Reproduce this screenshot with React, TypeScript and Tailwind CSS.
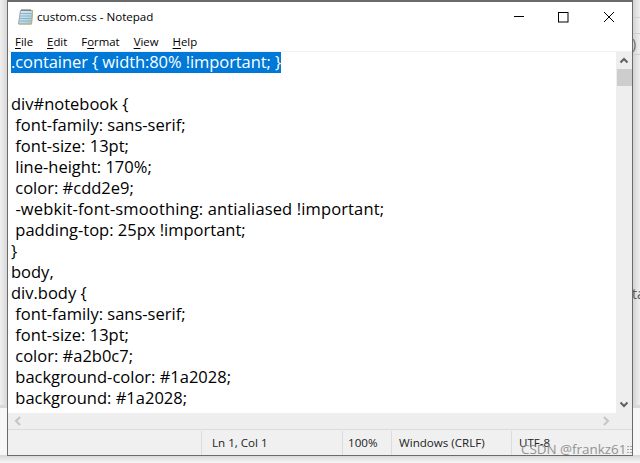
const lines: [string, string][] = [
  ["div#notebook {", ""],
  [" font-family: sans-serif;", ""],
  [" font-size: 13pt;", ""],
  [" line-height: 170%;", ""],
  [" color: #cdd2e9;", ""],
  [" -webkit-font-smoothing: antialiased !important;", "tracking-[0.13px]"],
  [" padding-top: 25px !important;", ""],
  ["}", ""],
  ["body,", ""],
  ["div.body {", ""],
  [" font-family: sans-serif;", ""],
  [" font-size: 13pt;", ""],
  [" color: #a2b0c7;", ""],
  [" background-color: #1a2028;", ""],
  [" background: #1a2028;", ""],
];

function Menu({ k, rest, pre = "" }: { k: string; rest: string; pre?: string }) {
  return (
    <span>
      {pre}
      <span className="underline underline-offset-2">{k}</span>
      {rest}
    </span>
  );
}

export default function App() {
  return (
    <div className="relative w-[640px] h-[463px] overflow-hidden bg-[#f7f7f7] font-['Open_Sans','Noto_Sans',sans-serif]">
      {/* desktop behind the window */}
      <div className="absolute left-0 top-0 w-[7px] h-[405px] bg-gradient-to-r from-[#f0f0f0] to-[#d8d8d8]" />
      <div className="absolute left-[633px] top-0 w-[7px] h-[405px] bg-gradient-to-r from-[#d4d4d4] to-[#efefef]" />
      <div className="absolute left-[633px] top-[17px] w-[7px] h-[1px] bg-[#cfcfcf]" />
      <div className="absolute left-[633px] top-[33px] w-[7px] h-[1px] bg-[#cfcfcf]" />
      <div className="absolute left-[633px] top-[54px] w-[7px] h-[1px] bg-[#cfcfcf]" />
      <div className="absolute left-[632px] top-[35px] w-[8px] overflow-hidden text-[14px] leading-[18px] text-[#666]">)</div>
      <div className="absolute left-[632px] top-[285px] w-[8px] overflow-hidden text-[14px] leading-[18px] text-[#555]">ta</div>
      <div className="absolute left-0 top-[405px] w-[640px] h-[3px] bg-[#d9d9d9]" />
      <div className="absolute left-0 top-[455px] w-[640px] h-[8px] bg-gradient-to-b from-[#d6d6d6] to-[#f7f7f7]" />

      <div className="relative ml-[7px] w-[626px] h-[456px] flex flex-col border border-[#6b6b6b] border-t-2 bg-white">
        <div className="flex items-center h-[30px] shrink-0">
          <svg width="17" height="17" viewBox="0 0 17 17" className="ml-[9px] -mt-[2px]">
            <defs>
              <linearGradient id="pad" x1="0" y1="0" x2="1" y2="1">
                <stop offset="0" stopColor="#dceef6" />
                <stop offset="1" stopColor="#9fcadd" />
              </linearGradient>
            </defs>
            <path d="M3.5 2.5H15.5L14.5 16H1.5z" fill="url(#pad)" stroke="#9aa6a8" strokeWidth="1" />
            <path d="M3 5.5h11.5M2.8 8h11.5M2.6 10.5h11.5M2.4 13h11.5" stroke="#86b3c9" strokeWidth="1" />
            <path d="M5 3V1M7 3V1M9 3V1M11 3V1M13 3V1" stroke="#666" strokeWidth="1" />
            <path d="M15.5 3L14.5 16H2" fill="none" stroke="#c4b07c" strokeWidth="1" />
          </svg>
          <span className="ml-[3px] text-[11.6px] text-black">custom.css - Notepad</span>
          <div className="ml-auto flex items-center h-full">
            <svg width="12" height="12" viewBox="0 0 12 12" className="mr-[33px]">
              <path d="M1 5.5h10" stroke="#000" strokeWidth="1" />
            </svg>
            <svg width="11" height="11" viewBox="0 0 11 11" className="mr-[34px]">
              <rect x="0.5" y="0.5" width="9.5" height="9.5" fill="none" stroke="#000" />
            </svg>
            <svg width="12" height="12" viewBox="0 0 12 12" className="mr-[17px]">
              <path d="M1 1l10 10M11 1L1 11" stroke="#000" strokeWidth="1" />
            </svg>
          </div>
        </div>
        <div className="flex items-center gap-[14px] h-[19px] shrink-0 pl-[7px] text-[11.4px] text-black">
          <Menu k="F" rest="ile" />
          <Menu k="E" rest="dit" />
          <Menu pre="F" k="o" rest="rmat" />
          <Menu k="V" rest="iew" />
          <Menu k="H" rest="elp" />
        </div>
        <div className="h-[1px] shrink-0 bg-[#f0f0f0]" />
        <div className="flex flex-1 min-h-0">
          <div className="flex-1 min-w-0 overflow-hidden pl-[3px] text-[16.5px] leading-[19px] text-black whitespace-pre">
            <div className="h-[21px]">
              <span className="bg-[#0078d7] text-white inline-block h-[21px] tracking-[-0.08px]">.container {"{"} width:80% !important; {"}"}</span>
            </div>
            <div className="h-[21px]" />
            {lines.map(([l, c], i) => (
              <div key={i} className={`h-[21px] ${c}`}>{l}</div>
            ))}
          </div>
          <div className="w-[16px] shrink-0 bg-[#eeeeee] flex flex-col items-center">
            <svg width="16" height="17" viewBox="0 0 16 17" className="shrink-0">
              <path d="M4.5 10.5L8 7l3.5 3.5" fill="none" stroke="#606060" strokeWidth="2" />
            </svg>
            <div className="w-[15px] h-[17px] bg-[#cdcdcd]" />
            <div className="flex-1" />
            <svg width="16" height="17" viewBox="0 0 16 17" className="shrink-0">
              <path d="M4.5 6.5L8 10l3.5-3.5" fill="none" stroke="#606060" strokeWidth="2" />
            </svg>
          </div>
        </div>
        <div className="flex items-center justify-between h-[16px] shrink-0 bg-[#eeeeee] pl-[5px] pr-[21px]">
          <svg width="10" height="12" viewBox="0 0 10 12">
            <path d="M7 2L3 6l4 4" fill="none" stroke="#c4c4c4" strokeWidth="2" />
          </svg>
          <svg width="10" height="12" viewBox="0 0 10 12">
            <path d="M3 2l4 4-4 4" fill="none" stroke="#c4c4c4" strokeWidth="2" />
          </svg>
        </div>
        <div className="flex h-[26px] shrink-0 bg-[#f0f0f0] border-t border-[#dcdcdc] text-[11.6px] text-[#222] pt-[1px]">
          <div className="w-[194px] border-r border-[#dcdcdc]" />
          <div className="w-[141px] pl-[10px] flex items-center border-r border-[#dcdcdc]">Ln 1, Col 1</div>
          <div className="w-[49px] pl-[5px] flex items-center border-r border-[#dcdcdc]">100%</div>
          <div className="w-[120px] pl-[7px] flex items-center border-r border-[#dcdcdc]">Windows (CRLF)</div>
          <div className="flex-1 pl-[7px] flex items-center">UTF-8</div>
        </div>
      </div>

      {/* watermark */}
      <div className="absolute left-[521px] top-[441px] text-[13.4px] leading-[16px] text-[#8a8a8a] opacity-90 whitespace-nowrap">
        CSDN @frankz61
      </div>
      <svg width="6" height="8" viewBox="0 0 6 8" className="absolute left-[627px] top-[445px]">
        <path d="M0 1h2v1H0zM3 1h2v1H3zM0 4h2v1H0zM3 4h2v1H3zM0 7h2v1H0zM3 7h2v1H3z" fill="#a8a8a8" />
      </svg>
    </div>
  );
}
